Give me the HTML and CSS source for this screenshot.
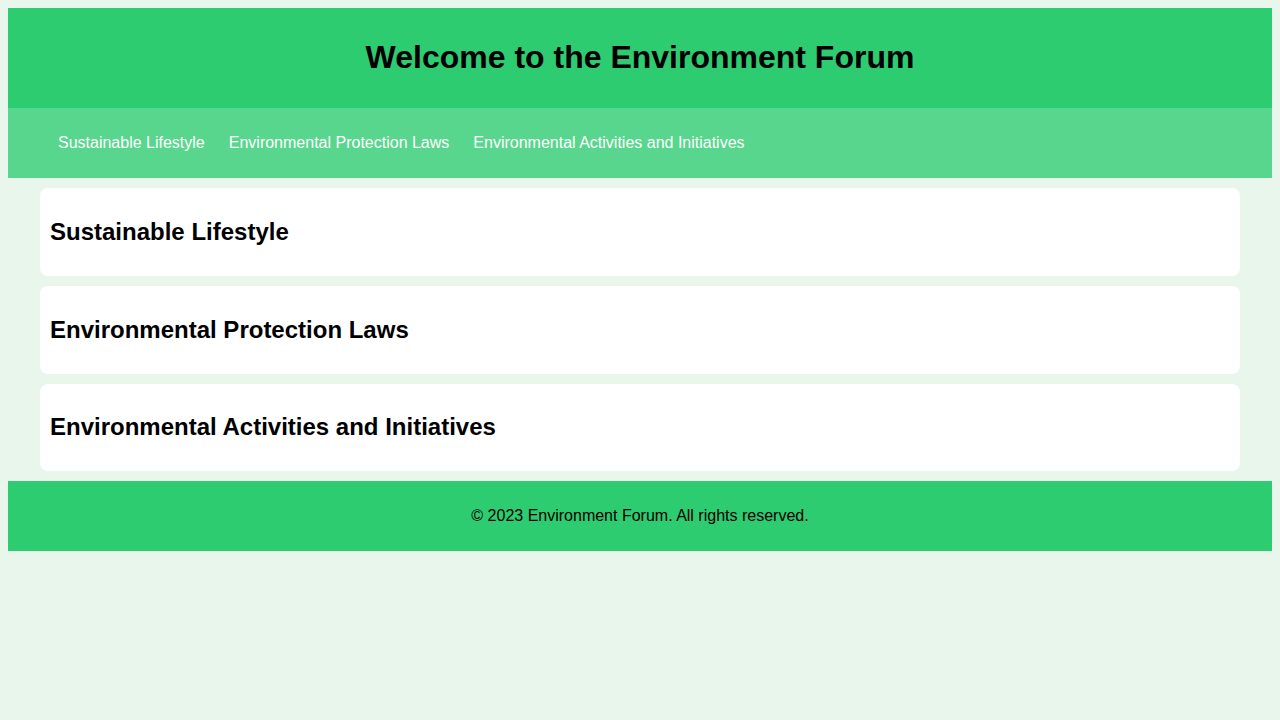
FILE: index.html
```html
<!DOCTYPE html>
<html lang="en">
<head>
<meta charset="UTF-8">
<title>Environment Forum</title>
<link rel="stylesheet" href="styles.css">
</head>
<body>
<header class="site-header">
  <h1>Welcome to the Environment Forum</h1>
</header>
<nav class="site-nav">
  <ul class="nav-list">
    <li><a href="#sustainable">Sustainable Lifestyle</a></li>
    <li><a href="#laws">Environmental Protection Laws</a></li>
    <li><a href="#activities">Environmental Activities and Initiatives</a></li>
  </ul>
</nav>
<main class="content">
  <section class="card" id="sustainable"><h2>Sustainable Lifestyle</h2></section>
  <section class="card" id="laws"><h2>Environmental Protection Laws</h2></section>
  <section class="card" id="activities"><h2>Environmental Activities and Initiatives</h2></section>
</main>
<footer class="site-footer">
  <p>&copy; 2023 Environment Forum. All rights reserved.</p>
</footer>
</body>
</html>
```
FILE: styles.css
```css
body {
  margin: 8px;
  background: #e8f6ec;
  font-family: "Liberation Sans", Arial, sans-serif;
  color: #000;
}
.site-header {
  background: #2ecc71;
  padding: 10px;
  text-align: center;
}
.site-header h1 {
  font-size: 32px;
  margin: 21.44px 0;
}
.site-nav {
  background: #58d68d;
  padding: 10px;
}
.nav-list {
  list-style: none;
  margin: 16px 0;
  padding: 0 0 0 40px;
  display: flex;
  gap: 24px;
}
.nav-list a {
  color: #fff;
  text-decoration: none;
  font-size: 16px;
}
.content {
  max-width: 1200px;
  margin: 0 auto;
}
.card {
  background: #fff;
  border-radius: 8px;
  padding: 10px;
  margin: 10px 0;
}
.card h2 {
  font-size: 24px;
  margin: 19.92px 0;
}
.site-footer {
  background: #2ecc71;
  padding: 10px;
  text-align: center;
}
.site-footer p {
  margin: 16px 0;
  font-size: 16px;
}
```
